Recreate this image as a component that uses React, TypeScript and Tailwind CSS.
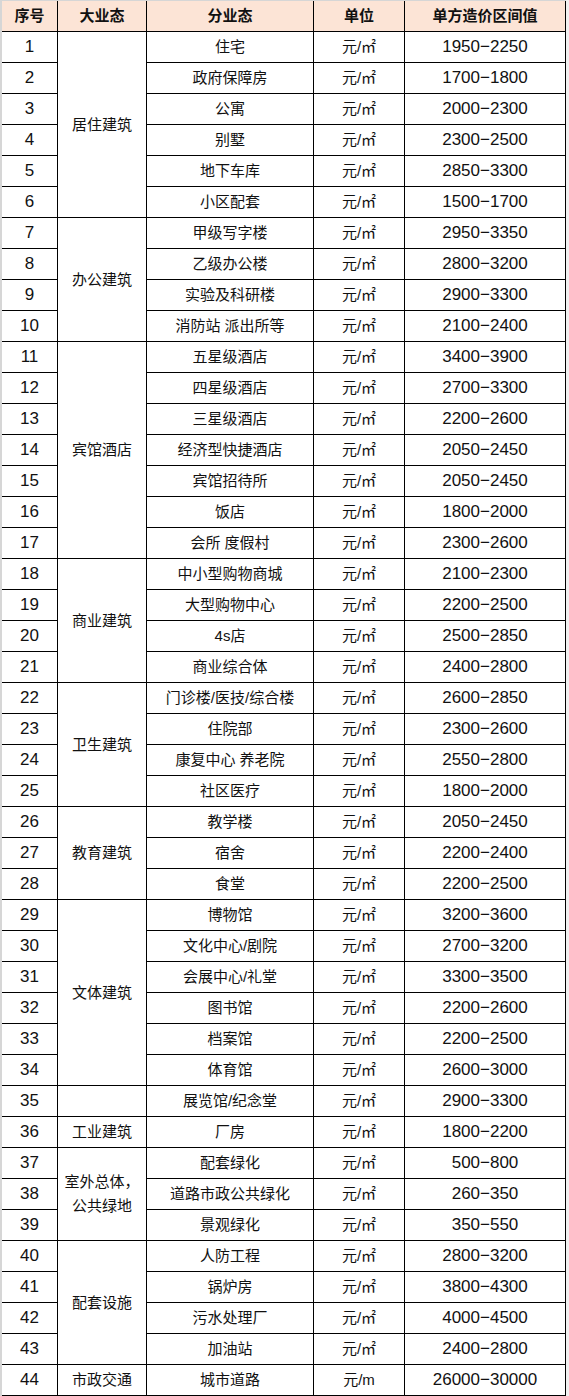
import { Fragment } from "react"

const rows: { group?: [string, number]; sub: string; unit?: string; range: string }[] = [
  { group: ["居住建筑", 6], sub: "住宅", range: "1950−2250" },
  { sub: "政府保障房", range: "1700−1800" },
  { sub: "公寓", range: "2000−2300" },
  { sub: "别墅", range: "2300−2500" },
  { sub: "地下车库", range: "2850−3300" },
  { sub: "小区配套", range: "1500−1700" },
  { group: ["办公建筑", 4], sub: "甲级写字楼", range: "2950−3350" },
  { sub: "乙级办公楼", range: "2800−3200" },
  { sub: "实验及科研楼", range: "2900−3300" },
  { sub: "消防站 派出所等", range: "2100−2400" },
  { group: ["宾馆酒店", 7], sub: "五星级酒店", range: "3400−3900" },
  { sub: "四星级酒店", range: "2700−3300" },
  { sub: "三星级酒店", range: "2200−2600" },
  { sub: "经济型快捷酒店", range: "2050−2450" },
  { sub: "宾馆招待所", range: "2050−2450" },
  { sub: "饭店", range: "1800−2000" },
  { sub: "会所 度假村", range: "2300−2600" },
  { group: ["商业建筑", 4], sub: "中小型购物商城", range: "2100−2300" },
  { sub: "大型购物中心", range: "2200−2500" },
  { sub: "4s店", range: "2500−2850" },
  { sub: "商业综合体", range: "2400−2800" },
  { group: ["卫生建筑", 4], sub: "门诊楼/医技/综合楼", range: "2600−2850" },
  { sub: "住院部", range: "2300−2600" },
  { sub: "康复中心 养老院", range: "2550−2800" },
  { sub: "社区医疗", range: "1800−2000" },
  { group: ["教育建筑", 3], sub: "教学楼", range: "2050−2450" },
  { sub: "宿舍", range: "2200−2400" },
  { sub: "食堂", range: "2200−2500" },
  { group: ["文体建筑", 6], sub: "博物馆", range: "3200−3600" },
  { sub: "文化中心/剧院", range: "2700−3200" },
  { sub: "会展中心/礼堂", range: "3300−3500" },
  { sub: "图书馆", range: "2200−2600" },
  { sub: "档案馆", range: "2200−2500" },
  { sub: "体育馆", range: "2600−3000" },
  { group: ["", 1], sub: "展览馆/纪念堂", range: "2900−3300" },
  { group: ["工业建筑", 1], sub: "厂房", range: "1800−2200" },
  { group: ["室外总体，\n公共绿地", 3], sub: "配套绿化", range: "500−800" },
  { sub: "道路市政公共绿化", range: "260−350" },
  { sub: "景观绿化", range: "350−550" },
  { group: ["配套设施", 4], sub: "人防工程", range: "2800−3200" },
  { sub: "锅炉房", range: "3800−4300" },
  { sub: "污水处理厂", range: "4000−4500" },
  { sub: "加油站", range: "2400−2800" },
  { group: ["市政交通", 1], sub: "城市道路", unit: "元/m", range: "26000−30000" },
]

const spans: Record<number, string> = {
  1: "row-span-1",
  3: "row-span-3",
  4: "row-span-4",
  6: "row-span-6",
  7: "row-span-7",
}

const cell = "flex items-center justify-center border-r border-b border-black text-center"

export default function App() {
  return (
    <div className="w-[569px] h-[1396px] overflow-hidden bg-[#f0f0f0] font-['Liberation_Sans','Noto_Sans_CJK_SC',sans-serif] text-[15px] text-[#111]">
      <div className="w-[566px] border-l-2 border-t border-[#d6d6d6] bg-white">
        <div className="grid grid-cols-[56px_89px_167px_91px_161px] auto-rows-[31px]">
          {/* Header */}
          {["序号", "大业态", "分业态", "单位", "单方造价区间值"].map((h) => (
            <div key={h} className={`${cell} bg-[#fce4d6] font-bold`}>
              {h}
            </div>
          ))}

          {/* Body */}
          {rows.map((r, i) => (
            <Fragment key={i}>
              <div className={`${cell} text-[17px]`}>{i + 1}</div>
              {r.group && (
                <div className={`${cell} ${spans[r.group[1]]} whitespace-pre-line leading-[24px]`}>
                  {r.group[0]}
                </div>
              )}
              <div className={cell}>{r.sub}</div>
              <div className={cell}>{r.unit ?? "元/㎡"}</div>
              <div className={`${cell} text-[17px]`}>{r.range}</div>
            </Fragment>
          ))}
        </div>
      </div>
    </div>
  )
}
